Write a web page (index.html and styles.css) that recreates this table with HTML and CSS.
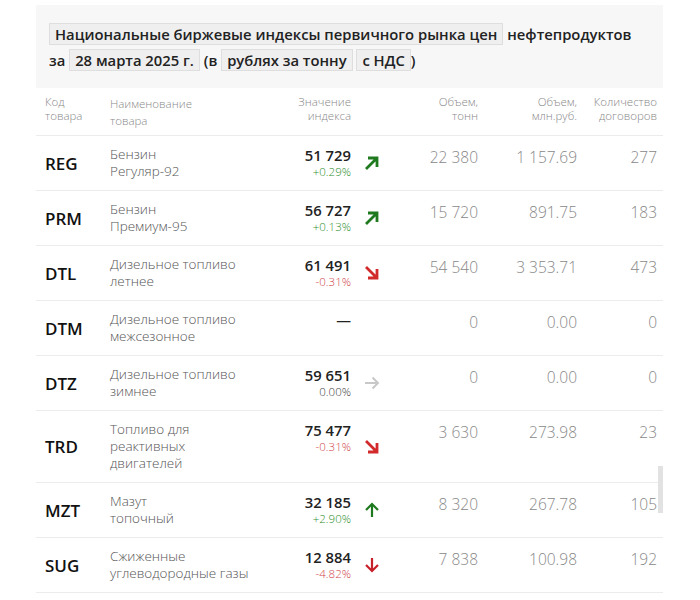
FILE: index.html
```html
<!DOCTYPE html>
<html lang="ru">
<head>
<meta charset="utf-8">
<link rel="stylesheet" href="styles.css">
</head>
<body>
<div class="page">
  <div class="title">
    <div class="line"><span class="chip">Национальные биржевые индексы первичного рынка цен</span> нефтепродуктов</div>
    <div class="line">за <span class="chip">28 марта 2025 г.</span> (в <span class="chip">рублях за тонну</span> <span class="chip">с НДС</span>)</div>
  </div>
  <div class="table">
    <div class="row head">
      <div class="c-code">Код<br>товара</div>
      <div class="c-name">Наименование<br>товара</div>
      <div class="c-idx">Значение<br>индекса</div>
      <div class="c-arr"></div>
      <div class="c-num">Объем,<br>тонн</div>
      <div class="c-num">Объем,<br>млн.руб.</div>
      <div class="c-num">Количество<br>договоров</div>
    </div>

    <div class="row">
      <div class="c-code">REG</div>
      <div class="c-name">Бензин<br>Регуляр-92</div>
      <div class="c-idx"><div class="val">51 729</div><div class="pct up">+0.29%</div></div>
      <div class="c-arr"><svg class="ic" viewBox="0 0 16 16"><path d="M2 14 L12.5 3.5 M4 3 H13 V12" fill="none" stroke="#1f7a1f" stroke-width="2.8"/></svg></div>
      <div class="c-num">22 380</div>
      <div class="c-num">1 157.69</div>
      <div class="c-num">277</div>
    </div>

    <div class="row">
      <div class="c-code">PRM</div>
      <div class="c-name">Бензин<br>Премиум-95</div>
      <div class="c-idx"><div class="val">56 727</div><div class="pct up">+0.13%</div></div>
      <div class="c-arr"><svg class="ic" viewBox="0 0 16 16"><path d="M2 14 L12.5 3.5 M4 3 H13 V12" fill="none" stroke="#1f7a1f" stroke-width="2.8"/></svg></div>
      <div class="c-num">15 720</div>
      <div class="c-num">891.75</div>
      <div class="c-num">183</div>
    </div>

    <div class="row">
      <div class="c-code">DTL</div>
      <div class="c-name">Дизельное топливо<br>летнее</div>
      <div class="c-idx"><div class="val">61 491</div><div class="pct down">-0.31%</div></div>
      <div class="c-arr"><svg class="ic" viewBox="0 0 16 16"><path d="M2 2 L12.5 12.5 M4 13 H13 V4" fill="none" stroke="#d22a2a" stroke-width="2.8"/></svg></div>
      <div class="c-num">54 540</div>
      <div class="c-num">3 353.71</div>
      <div class="c-num">473</div>
    </div>

    <div class="row">
      <div class="c-code">DTM</div>
      <div class="c-name">Дизельное топливо<br>межсезонное</div>
      <div class="c-idx"><div class="val dash">—</div></div>
      <div class="c-arr"></div>
      <div class="c-num">0</div>
      <div class="c-num">0.00</div>
      <div class="c-num">0</div>
    </div>

    <div class="row">
      <div class="c-code">DTZ</div>
      <div class="c-name">Дизельное топливо<br>зимнее</div>
      <div class="c-idx"><div class="val">59 651</div><div class="pct zero">0.00%</div></div>
      <div class="c-arr"><svg class="ic" viewBox="0 0 16 16"><path d="M1 8 H14 M8.5 2.5 L14 8 L8.5 13.5" fill="none" stroke="#c8c8c8" stroke-width="2"/></svg></div>
      <div class="c-num">0</div>
      <div class="c-num">0.00</div>
      <div class="c-num">0</div>
    </div>

    <div class="row tall">
      <div class="c-code">TRD</div>
      <div class="c-name">Топливо для<br>реактивных<br>двигателей</div>
      <div class="c-idx"><div class="val">75 477</div><div class="pct down">-0.31%</div></div>
      <div class="c-arr"><svg class="ic" viewBox="0 0 16 16"><path d="M2 2 L12.5 12.5 M4 13 H13 V4" fill="none" stroke="#d22a2a" stroke-width="2.8"/></svg></div>
      <div class="c-num">3 630</div>
      <div class="c-num">273.98</div>
      <div class="c-num">23</div>
    </div>

    <div class="row">
      <div class="c-code">MZT</div>
      <div class="c-name">Мазут<br>топочный</div>
      <div class="c-idx"><div class="val">32 185</div><div class="pct up">+2.90%</div></div>
      <div class="c-arr"><svg class="ic" viewBox="0 0 16 16"><path d="M8 15 V2 M2 8 L8 2 L14 8" fill="none" stroke="#1f7a1f" stroke-width="2.2"/></svg></div>
      <div class="c-num">8 320</div>
      <div class="c-num">267.78</div>
      <div class="c-num">105</div>
    </div>

    <div class="row">
      <div class="c-code">SUG</div>
      <div class="c-name">Сжиженные<br>углеводородные газы</div>
      <div class="c-idx"><div class="val">12 884</div><div class="pct down">-4.82%</div></div>
      <div class="c-arr"><svg class="ic" viewBox="0 0 16 16"><path d="M8 1 V14 M2 8 L8 14 L14 8" fill="none" stroke="#c8202a" stroke-width="2.2"/></svg></div>
      <div class="c-num">7 838</div>
      <div class="c-num">100.98</div>
      <div class="c-num">192</div>
    </div>
    <div class="scroll"></div>
  </div>
</div>
</body>
</html>
```
FILE: styles.css
```css
* { box-sizing: border-box; }
body {
  margin: 0;
  background: #fff;
  font-family: "Open Sans", "Noto Sans", sans-serif;
  color: #222;
}
.page {
  width: 627px;
  margin: 5px 0 0 36px;
}
.title {
  background: #f7f7f7;
  padding: 16px 10px 18px 13px;
  font-size: 14.8px;
  font-weight: 600;
  color: #222;
  height: 83px;
}
.line {
  line-height: 26px;
  white-space: nowrap;
}
.chip {
  display: inline-block;
  background: #efefef;
  border: 1px solid #dedede;
  padding: 0 5px;
  line-height: 20px;
}
.table {
  position: relative;
}
.row {
  display: grid;
  grid-template-columns: 74px 160px 81px 39px 88px 99px 80px;
  height: 55px;
  border-bottom: 1px solid #ececec;
  align-items: start;
}
.row.tall { height: 72px; }
.row.head {
  height: 48px;
  padding-top: 7px;
  font-size: 11.5px;
  line-height: 14px;
  font-weight: 300;
  color: #8a8a8a;
}
.c-code {
  padding-left: 9px;
  align-self: center;
  font-size: 17px;
  font-weight: 600;
  color: #111;
}
.row.head .c-code, .row.head .c-name { font-size: 11.5px; font-weight: 300; color: #8a8a8a; align-self: start; }
.c-name {
  padding-top: 10px;
  font-size: 13.5px;
  line-height: 17px;
  font-weight: 300;
  color: #555;
}
.c-idx {
  text-align: right;
  padding-top: 11px;
}
.row.head .c-name, .row.head .c-idx, .row.head .c-num { padding-top: 0; }
.val {
  font-size: 14.8px;
  font-weight: 600;
  line-height: 17px;
  color: #222;
}
.val.dash { font-weight: 400; }
.pct {
  font-size: 11.5px;
  line-height: 15px;
  font-weight: 300;
}
.pct.up { color: #2f8f2f; }
.pct.down { color: #d0464a; }
.pct.zero { color: #444; }
.c-arr {
  align-self: center;
  display: flex;
  justify-content: center;
  padding-left: 2px;
}
.ic { width: 16px; height: 16px; display: block; }
.c-num {
  text-align: right;
  padding-top: 10px;
  font-size: 15.5px;
  font-weight: 300;
  color: #888;
}
.row.head .c-num { font-size: 11.5px; }
.scroll {
  position: absolute;
  right: 0;
  top: 378px;
  width: 5px;
  height: 47px;
  background: #e2e2e2;
}
```
